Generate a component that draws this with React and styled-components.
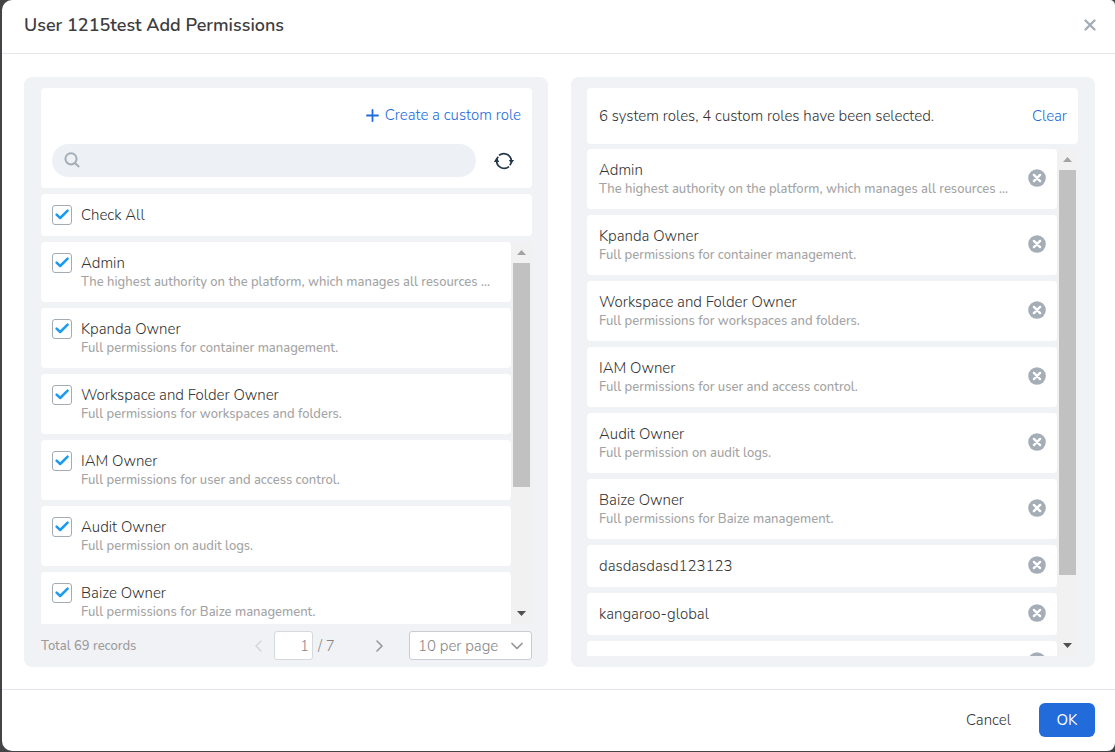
import React from 'react';
import styled, { createGlobalStyle } from 'styled-components';

const GlobalStyle = createGlobalStyle`
  *, *::before, *::after { box-sizing: border-box; }
  body {
    margin: 0;
    background: #444446;
    color: #333;
    font-family: Nunito, Lato, "Liberation Sans", sans-serif;
    font-size: 15px;
    font-weight: 300;
    line-height: 20px;
  }
  button, input, select { font: inherit; color: inherit; }
  h1, p, ul { margin: 0; padding: 0; }
  ul { list-style: none; }
`;

const Page = styled.div`
  height: 100vh;
  padding: 0 0 1px 2px;
`;

const Dialog = styled.section`
  display: flex;
  flex-direction: column;
  height: 100%;
  background: #fff;
  border-radius: 10px 5px 8px 10px;
  overflow: hidden;
`;

const Header = styled.header`
  display: flex;
  align-items: center;
  justify-content: space-between;
  height: 54px;
  padding: 0 18px 4px 22px;
  border-bottom: 1px solid #e3e5ed;
`;

const Title = styled.h1`
  font-size: 18px;
  line-height: 24px;
  font-weight: 600;
  color: #3d3d3d;
`;

const Body = styled.main`
  flex: 1;
  min-height: 0;
  display: grid;
  grid-template-columns: 1fr 1fr;
  grid-template-rows: minmax(0, 1fr);
  gap: 23px;
  padding: 23px 20px 22px 22px;
`;

const Panel = styled.div`
  display: flex;
  flex-direction: column;
  min-width: 0;
  padding: ${(p) => (p.$flush ? '11px 16px 0 17px' : '11px 17px 11px 16px')};
  background: #f1f2f6;
  border-radius: 8px;
`;

const Card = styled.div`
  background: #fff;
  border-radius: 4px;
`;

const Toolbar = styled(Card)`
  display: flex;
  flex-direction: column;
  gap: 19px;
  height: 100px;
  padding: 17px 11px 0;
  margin-bottom: 6px;
`;

const ToolbarRow = styled.div`
  display: flex;
  align-items: center;
  justify-content: ${(p) => (p.$end ? 'flex-end' : 'space-between')};
`;

const IconButton = styled.button`
  display: inline-grid;
  place-items: center;
  flex: none;
  padding: 0;
  border: 0;
  background: none;
  cursor: pointer;
`;

const TextButton = styled.button`
  display: inline-flex;
  align-items: center;
  gap: 6px;
  padding: 0;
  border: 0;
  background: none;
  color: #216bdb;
  cursor: pointer;
`;

const SearchBox = styled.label`
  display: flex;
  align-items: center;
  flex: 1;
  gap: 8px;
  height: 33px;
  margin-right: 18px;
  padding: 0 12px 2px;
  border-radius: 17px;
  background: #edf0f5;
`;

const SearchInput = styled.input`
  flex: 1;
  min-width: 0;
  border: 0;
  outline: 0;
  background: none;
`;

const RefreshButton = styled(IconButton)`
  width: 20px;
  height: 20px;
  margin-right: 7px;
`;

const CheckAll = styled(Card)`
  padding: 11px;
  margin-bottom: 6px;
`;

const Summary = styled(Card)`
  display: flex;
  align-items: center;
  justify-content: space-between;
  height: 56px;
  padding: 0 11px 0 12px;
  margin-bottom: 5px;
`;

const ScrollArea = styled.div`
  flex: 1;
  min-height: 0;
  display: flex;
`;

const List = styled.ul`
  flex: 1;
  min-width: 0;
  display: flex;
  flex-direction: column;
  gap: 6px;
  overflow: hidden;
`;

const Item = styled.li`
  flex: none;
  padding: 11px 11px 11px ${(p) => (p.$removable ? '12px' : '11px')};
  background: #fff;
  border-radius: 4px;
  ${(p) => p.$removable && 'display: flex; align-items: center;'}
`;

const CheckLabel = styled.label`
  display: flex;
  align-items: flex-start;
  gap: 9px;
`;

const CheckFrame = styled.span`
  display: grid;
  flex: none;
  width: 20px;
  height: 20px;
  > * { grid-area: 1 / 1; }
  svg { pointer-events: none; opacity: 0; }
  input:checked + svg { opacity: 1; }
`;

const CheckInput = styled.input`
  appearance: none;
  width: 20px;
  height: 20px;
  margin: 0;
  border: 1px solid #a3abb5;
  border-radius: 3px;
  background: #fff;
`;

const ItemText = styled.span`
  display: block;
  flex: 1;
  min-width: 0;
`;

const Name = styled.span`
  display: block;
`;

const Description = styled.span`
  display: block;
  font-size: 13px;
  font-weight: 500;
  line-height: 18px;
  color: #a3a3a3;
  white-space: nowrap;
`;

const RemoveButton = styled(IconButton)`
  width: 18px;
  height: 20px;
  padding-bottom: 2px;
`;

const Track = styled.div`
  display: flex;
  flex-direction: column;
  flex: none;
  width: 21px;
  background: #f1f1f1;
`;

const Arrow = styled.div`
  display: grid;
  place-items: center;
  flex: none;
  height: 21px;
`;

const Thumb = styled.div`
  flex: ${(p) => p.$shown};
  margin: 0 2px;
  background: #c1c1c1;
`;

const Rest = styled.div`
  flex: ${(p) => p.$hidden};
`;

const Pager = styled.nav`
  display: flex;
  align-items: center;
  height: 43px;
  color: #858585;
`;

const Total = styled.span`
  flex: 1;
  font-size: 13px;
  font-weight: 500;
  color: #9b9b9b;
`;

const PageInput = styled.input`
  width: 39px;
  height: 29px;
  margin: 0 5px 0 10px;
  padding: 0 3px;
  border: 1px solid #d5d8dd;
  border-radius: 3px;
  background: #fff;
  text-align: right;
`;

const PageCount = styled.span`
  width: 55px;
`;

const SelectFrame = styled.div`
  display: grid;
  align-items: center;
  width: 123px;
  height: 29px;
  margin-left: 24px;
  > * { grid-area: 1 / 1; }
  svg { justify-self: end; margin-right: 9px; pointer-events: none; }
`;

const PageSize = styled.select`
  appearance: none;
  width: 100%;
  height: 29px;
  padding: 0 24px 0 8px;
  border: 1px solid #c8cdd3;
  border-radius: 3px;
  background: #fff;
`;

const Footer = styled.footer`
  display: flex;
  align-items: center;
  justify-content: flex-end;
  gap: 28px;
  height: 62px;
  padding: 0 20px 2px;
  border-top: 1px solid #e3e5ea;
`;

const CancelButton = styled(TextButton)`
  color: #333;
`;

const OkButton = styled.button`
  width: 56px;
  height: 34px;
  padding: 0;
  border: 0;
  border-radius: 6px;
  background: #216bdb;
  color: #fff;
  font-weight: 400;
`;

const Stroke = ({ size, d, color, width = 2 }) => (
  <svg width={size} height={size} viewBox={`0 0 ${size} ${size}`} fill="none" stroke={color}
    strokeWidth={width} strokeLinecap="round" strokeLinejoin="round" aria-hidden="true">
    <path d={d} />
  </svg>
);

const RefreshIcon = () => (
  <svg width="20" height="18" viewBox="0 0 20 18" aria-hidden="true">
    <g fill="none" stroke="#22384a" strokeWidth="1.7">
      <path d="M2.6 8.4a7.5 7.5 0 0 1 1.6-3.6M5 3.4A7.6 7.6 0 0 1 17.4 8.6" />
      <path d="M17.4 9.6a7.5 7.5 0 0 1-1.6 3.6M15 14.6A7.6 7.6 0 0 1 2.6 9.4" />
    </g>
    <path d="M2.6 5.6 5.3 9.9H-.1zM17.4 11.6l2.7-3.6h-5.4z" fill="#22384a" />
  </svg>
);

const RemoveIcon = () => (
  <svg width="18" height="18" viewBox="0 0 18 18" aria-hidden="true">
    <circle cx="9" cy="9" r="8.8" fill="#a5adb6" />
    <path d="m5.9 5.9 6.2 6.2M12.1 5.9l-6.2 6.2" stroke="#fff" strokeWidth="2.4" strokeLinecap="round" />
  </svg>
);

const Checkbox = () => (
  <CheckFrame>
    <CheckInput type="checkbox" defaultChecked />
    <Stroke size={20} d="M4.6 9.6 8.2 13 15.6 5.6" color="#1b9bf0" width={2.5} />
  </CheckFrame>
);

const Scrollbar = ({ shown, hidden }) => (
  <Track aria-hidden="true">
    <Arrow><svg width="9" height="5"><path d="M0 5 4.5 0 9 5z" fill="#a3a3a3" /></svg></Arrow>
    <Thumb $shown={shown} />
    <Rest $hidden={hidden} />
    <Arrow><svg width="9" height="5"><path d="M0 0l4.5 5L9 0z" fill="#505050" /></svg></Arrow>
  </Track>
);

const systemRoles = [
  ['Admin', 'The highest authority on the platform, which manages all resources ...'],
  ['Kpanda Owner', 'Full permissions for container management.'],
  ['Workspace and Folder Owner', 'Full permissions for workspaces and folders.'],
  ['IAM Owner', 'Full permissions for user and access control.'],
  ['Audit Owner', 'Full permission on audit logs.'],
  ['Baize Owner', 'Full permissions for Baize management.'],
];

const selectedRoles = [...systemRoles, ['dasdasdasd123123'], ['kangaroo-global'], ['\u00a0']];

const RoleText = ({ name, description }) => (
  <ItemText>
    <Name>{name}</Name>
    {description && <Description>{description}</Description>}
  </ItemText>
);

export default function App() {
  return (
    <Page>
      <GlobalStyle />
      <Dialog role="dialog" aria-labelledby="dialog-title">
        <Header>
          <Title id="dialog-title">User 1215test Add Permissions</Title>
          <IconButton type="button" aria-label="Close">
            <Stroke size={14} d="M2.5 2.5l9 9M11.5 2.5l-9 9" color="#a5adb6" width={2.4} />
          </IconButton>
        </Header>
        <Body>
          <Panel $flush>
            <Toolbar>
              <ToolbarRow $end>
                <TextButton type="button">
                  <Stroke size={13} d="M6.5 1v11M1 6.5h11" color="#216bdb" width={1.8} />
                  Create a custom role
                </TextButton>
              </ToolbarRow>
              <ToolbarRow>
                <SearchBox>
                  <Stroke size={16} d="M7 1.2a5.6 5.6 0 1 0 0 11.2A5.6 5.6 0 0 0 7 1.2M11.2 11.2l3.4 3.2" color="#a5adb6" width={2} />
                  <SearchInput type="search" aria-label="Search roles" />
                </SearchBox>
                <RefreshButton type="button" aria-label="Refresh"><RefreshIcon /></RefreshButton>
              </ToolbarRow>
            </Toolbar>
            <CheckAll>
              <CheckLabel><Checkbox /><Name>Check All</Name></CheckLabel>
            </CheckAll>
            <ScrollArea>
              <List>
                {systemRoles.map(([name, description]) => (
                  <Item key={name}>
                    <CheckLabel><Checkbox /><RoleText name={name} description={description} /></CheckLabel>
                  </Item>
                ))}
              </List>
              <Scrollbar shown={224} hidden={116} />
            </ScrollArea>
            <Pager aria-label="Pagination">
              <Total>Total 69 records</Total>
              <IconButton type="button" aria-label="Previous page" disabled>
                <Stroke size={12} d="M9 1 4 6l5 5" color="#d3d6da" width={1.5} />
              </IconButton>
              <PageInput type="text" aria-label="Page" defaultValue="1" />
              <PageCount>/ 7</PageCount>
              <IconButton type="button" aria-label="Next page">
                <Stroke size={12} d="m4 1 5 5-5 5" color="#959595" width={1.5} />
              </IconButton>
              <SelectFrame>
                <PageSize aria-label="Records per page" defaultValue="10">
                  <option value="10">10 per page</option>
                  <option value="20">20 per page</option>
                </PageSize>
                <Stroke size={12} d="m1 3.5 5 5 5-5" color="#959595" width={1.7} />
              </SelectFrame>
            </Pager>
          </Panel>
          <Panel>
            <Summary>
              <span>6 system roles, 4 custom roles have been selected.</span>
              <TextButton type="button">Clear</TextButton>
            </Summary>
            <ScrollArea>
              <List>
                {selectedRoles.map(([name, description]) => (
                  <Item key={name} $removable>
                    <RoleText name={name} description={description} />
                    <RemoveButton type="button" aria-label={`Remove ${name}`}><RemoveIcon /></RemoveButton>
                  </Item>
                ))}
              </List>
              <Scrollbar shown={405} hidden={60} />
            </ScrollArea>
          </Panel>
        </Body>
        <Footer>
          <CancelButton type="button">Cancel</CancelButton>
          <OkButton type="button">OK</OkButton>
        </Footer>
      </Dialog>
    </Page>
  );
}
